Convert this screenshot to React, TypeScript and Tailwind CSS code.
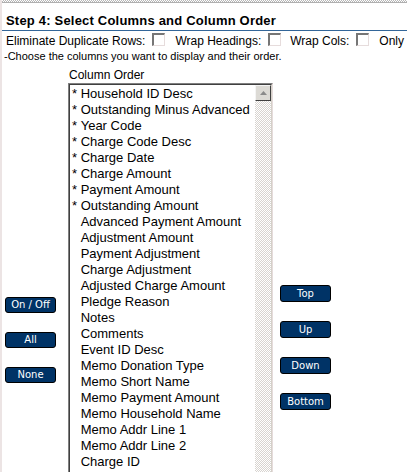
const columns: { label: string; starred: boolean }[] = [
  { label: "Household ID Desc", starred: true },
  { label: "Outstanding Minus Advanced", starred: true },
  { label: "Year Code", starred: true },
  { label: "Charge Code Desc", starred: true },
  { label: "Charge Date", starred: true },
  { label: "Charge Amount", starred: true },
  { label: "Payment Amount", starred: true },
  { label: "Outstanding Amount", starred: true },
  { label: "Advanced Payment Amount", starred: false },
  { label: "Adjustment Amount", starred: false },
  { label: "Payment Adjustment", starred: false },
  { label: "Charge Adjustment", starred: false },
  { label: "Adjusted Charge Amount", starred: false },
  { label: "Pledge Reason", starred: false },
  { label: "Notes", starred: false },
  { label: "Comments", starred: false },
  { label: "Event ID Desc", starred: false },
  { label: "Memo Donation Type", starred: false },
  { label: "Memo Short Name", starred: false },
  { label: "Memo Payment Amount", starred: false },
  { label: "Memo Household Name", starred: false },
  { label: "Memo Addr Line 1", starred: false },
  { label: "Memo Addr Line 2", starred: false },
  { label: "Charge ID", starred: false },
];

function Checkbox() {
  return (
    <span className="inline-block h-[13px] w-[13px] shrink-0 border-t-2 border-l-2 border-r border-b border-t-[#767676] border-l-[#767676] border-r-[#e6dcdc] border-b-[#e6dcdc] bg-white" />
  );
}

function NavButton({ label, tall }: { label: string; tall?: boolean }) {
  return (
    <button
      type="button"
      className={`flex w-[51px] items-center justify-center rounded-[3px] border border-black bg-[#003366] font-['DejaVu_Sans',sans-serif] text-[10px] leading-none text-white ${
        tall ? "h-[17px]" : "h-[16px]"
      }`}
    >
      {label}
    </button>
  );
}

export default function App() {
  return (
    <div className="h-[472px] w-[407px] overflow-hidden border-l-2 border-[#ece4e4] bg-white font-['Liberation_Sans',Arial,sans-serif] text-black">
      <div className="h-[3px] border-b border-[#b0b0b0] bg-[image:repeating-conic-gradient(#b8b8b8_0_25%,#ffffff_0_50%)] bg-[length:2px_2px]" />

      <div className="mt-[10px] border-b border-[#336699] pb-[1px] pl-[4px] text-[13px] font-bold leading-4 tracking-[0.2px] whitespace-nowrap">
        Step 4: Select Columns and Column Order
      </div>

      <div className="mt-px flex h-[18px] items-center whitespace-nowrap pl-[4px] text-[12px] leading-[15px]">
        <span>Eliminate Duplicate Rows:</span>
        <span className="ml-[7px]">
          <Checkbox />
        </span>
        <span className="ml-[10px]">Wrap Headings:</span>
        <span className="ml-[7px]">
          <Checkbox />
        </span>
        <span className="ml-[9px]">Wrap Cols:</span>
        <span className="ml-[7px]">
          <Checkbox />
        </span>
        <span className="ml-[10px]">Only Show Totals:</span>
      </div>

      <div className="pl-[2px] text-[11px] leading-[13px] whitespace-nowrap">
        -Choose the columns you want to display and their order.
      </div>

      <div className="mt-[5px] flex items-start">
        <div className="flex w-[66px] shrink-0 flex-col gap-[19px] pl-[3px] pt-[229px]">
          <NavButton label="On / Off" />
          <NavButton label="All" />
          <NavButton label="None" />
        </div>

        <div className="flex w-[205px] shrink-0 flex-col">
          <div className="pl-px text-[12px] leading-[15px]">Column Order</div>
          <div className="h-[400px] border-t border-l border-r border-b border-t-[#808080] border-l-[#808080] border-r-[#e6dcdc] border-b-[#e6dcdc]">
            <div className="flex h-full border-t border-l border-r border-b border-t-[#404040] border-l-[#404040] border-r-[#d4d0c8] border-b-[#d4d0c8]">
              <div className="min-w-0 flex-1 overflow-hidden pl-[2px] pt-px text-[13px] leading-4">
                {columns.map((c) => (
                  <div key={c.label} className="h-4 whitespace-nowrap">
                    <span className={c.starred ? "" : "invisible"}>*&nbsp;</span>
                    {c.label}
                  </div>
                ))}
              </div>
              <div className="flex w-[16px] shrink-0 flex-col">
                <div className="flex h-[16px] items-center justify-center border-t border-l border-t-[#f4f4f4] border-l-[#f4f4f4] border-r border-b border-r-[#404040] border-b-[#404040] bg-[#dcdad5]">
                  <svg width="7" height="4" viewBox="0 0 7 4">
                    <path d="M3.5 0 L7 4 L0 4 Z" fill="#8a8a8a" />
                  </svg>
                </div>
                <div className="flex-1 bg-[image:repeating-conic-gradient(#d8d4d0_0_25%,#ffffff_0_50%)] bg-[length:2px_2px]" />
              </div>
            </div>
          </div>
        </div>

        <div className="ml-[7px] flex flex-col gap-[19px] pt-[217px]">
          <NavButton label="Top" tall />
          <NavButton label="Up" tall />
          <NavButton label="Down" tall />
          <NavButton label="Bottom" tall />
        </div>
      </div>
    </div>
  );
}
